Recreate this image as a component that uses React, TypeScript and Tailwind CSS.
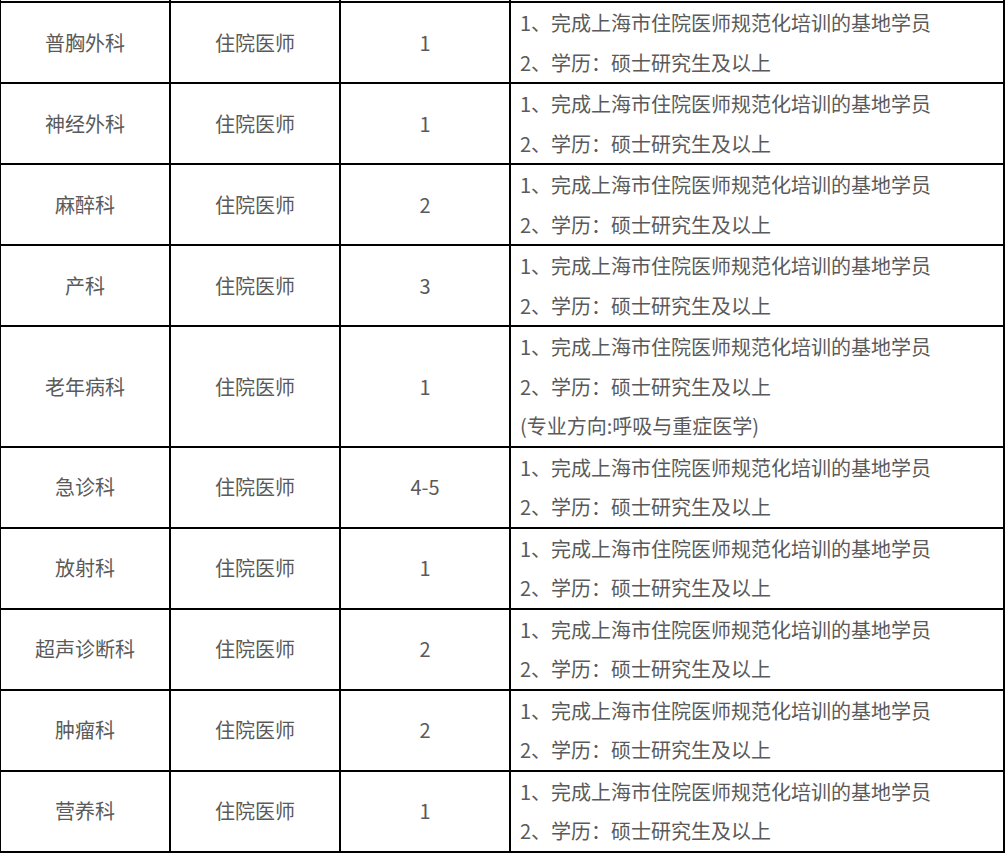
const rows = [
  { dept: "普胸外科", count: "1" },
  { dept: "神经外科", count: "1" },
  { dept: "麻醉科", count: "2" },
  { dept: "产科", count: "3" },
  { dept: "老年病科", count: "1", note: "(专业方向:呼吸与重症医学)" },
  { dept: "急诊科", count: "4-5" },
  { dept: "放射科", count: "1" },
  { dept: "超声诊断科", count: "2" },
  { dept: "肿瘤科", count: "2" },
  { dept: "营养科", count: "1" },
];

export default function App() {
  return (
    <div
      className="w-[1008px] h-[854px] overflow-hidden bg-white text-[#5a5a5a] text-[20px] leading-[39.5px]"
      style={{ fontFamily: '"Noto Sans CJK SC", "Noto Sans", sans-serif' }}
    >
      <table className="table-fixed border-collapse w-[1004px] -ml-px">
        <colgroup>
          <col className="w-[170px]" />
          <col className="w-[170px]" />
          <col className="w-[170px]" />
          <col className="w-[494px]" />
        </colgroup>
        <tbody>
          {/* tail of the row above, cut off by the page */}
          <tr>
            <td className="h-[2px] p-0 border-2 border-t-0 border-black"></td>
            <td className="h-[2px] p-0 border-2 border-t-0 border-black"></td>
            <td className="h-[2px] p-0 border-2 border-t-0 border-black"></td>
            <td className="h-[2px] p-0 border-2 border-t-0 border-black"></td>
          </tr>
          {rows.map((r) => (
            <tr key={r.dept}>
              <td className={`${r.note ? "h-[119px]" : "h-[79px]"} p-0 border-2 border-black text-center align-middle`}>
                {r.dept}
              </td>
              <td className="p-0 border-2 border-black text-center align-middle">住院医师</td>
              <td className="p-0 border-2 border-black text-center align-middle">{r.count}</td>
              <td className="p-0 pl-[9px] border-2 border-black align-top">
                <div>1、完成上海市住院医师规范化培训的基地学员</div>
                <div>2、学历：硕士研究生及以上</div>
                {r.note && <div>{r.note}</div>}
              </td>
            </tr>
          ))}
        </tbody>
      </table>
    </div>
  );
}
